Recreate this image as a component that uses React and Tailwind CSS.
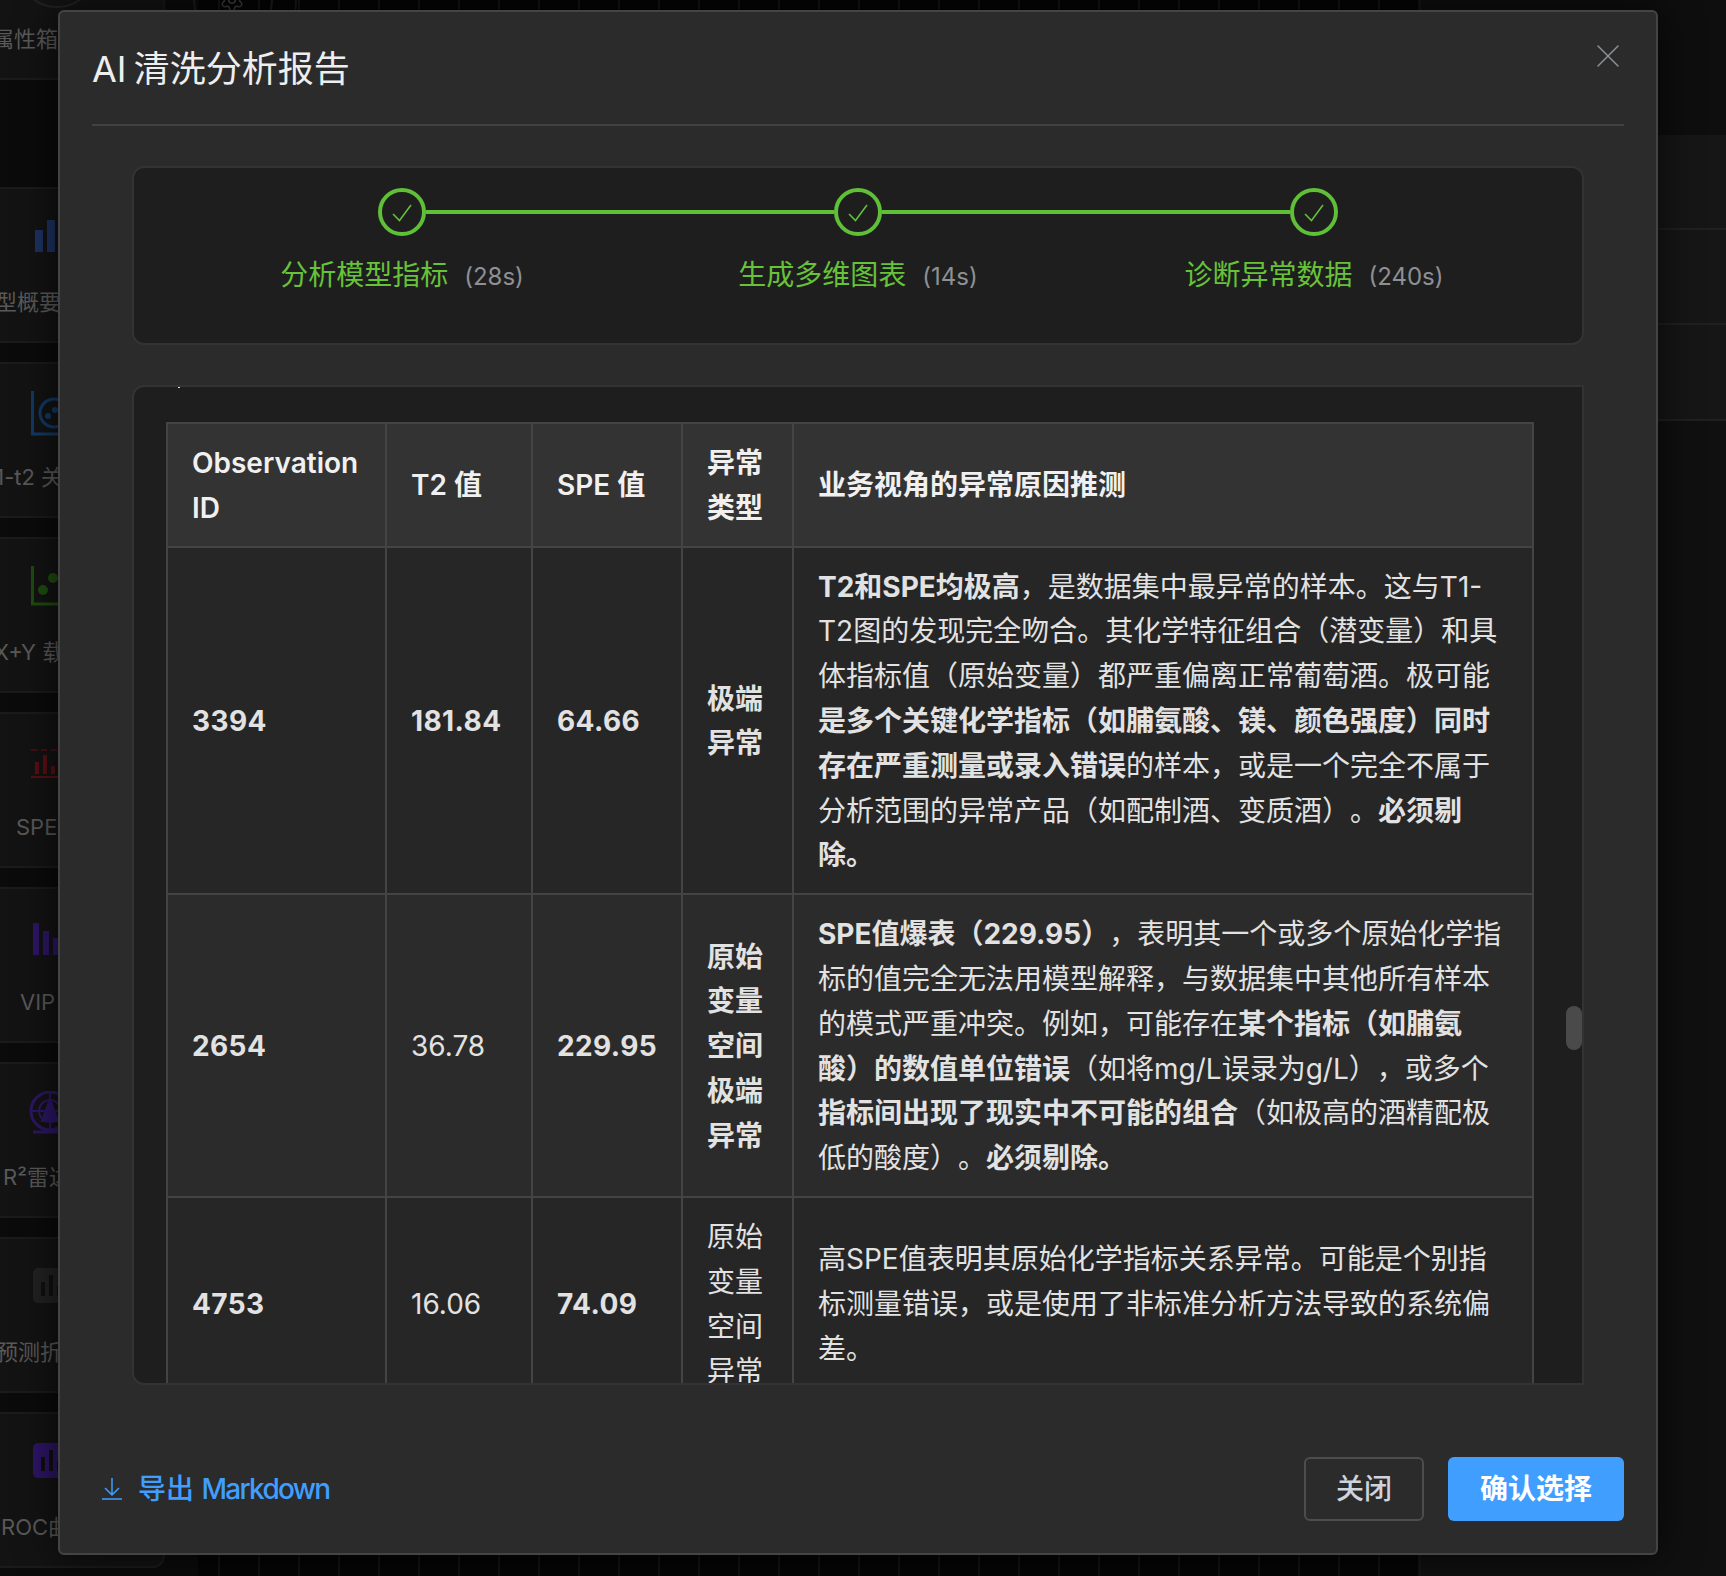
import { X, Settings } from "lucide-react";

const axis = "#123a66";

function BarsIcon() {
  return (
    <svg width="70" height="48" className="block" fill="#1e3261">
      <rect x="35" y="14" width="8" height="22" />
      <rect x="47" y="4" width="8" height="32" />
    </svg>
  );
}

function ScoreIcon() {
  return (
    <svg width="70" height="48" className="block" fill="none">
      <path d="M32.500 0V43H58" stroke={axis} strokeWidth="3" />
      <circle cx="54" cy="22" r="14" stroke={axis} strokeWidth="3" />
      <circle cx="48" cy="25" r="3" fill={axis} />
      <circle cx="55" cy="19" r="3" fill={axis} />
    </svg>
  );
}

function LoadingIcon() {
  return (
    <svg width="70" height="48" className="block" fill="none">
      <path d="M32.500 0V38H58" stroke="#1f4d0f" strokeWidth="3" />
      <circle cx="43" cy="24" r="5" fill="#1f4d0f" />
      <circle cx="53" cy="12" r="5" fill="#1f4d0f" />
    </svg>
  );
}

function SpeIcon() {
  return (
    <svg width="70" height="48" className="block" fill="#5a0f14">
      <path d="M31 9H58" stroke="#5a0f14" strokeWidth="1.500" strokeDasharray="6 4" />
      <rect x="35" y="21" width="4" height="12" />
      <rect x="43" y="14" width="4" height="19" />
      <rect x="51" y="25" width="4" height="8" />
      <rect x="31" y="35" width="27" height="2" />
    </svg>
  );
}

function VipIcon() {
  return (
    <svg width="70" height="48" className="block" fill="#2d1666">
      <rect x="33" y="7" width="6" height="32" />
      <rect x="43" y="15" width="6" height="24" />
      <rect x="53" y="22" width="6" height="17" />
    </svg>
  );
}

function RadarIcon() {
  return (
    <svg width="70" height="48" className="block" fill="none" stroke="#2d1666" strokeWidth="2">
      <circle cx="50" cy="20" r="19" strokeWidth="3" />
      <circle cx="50" cy="20" r="11" />
      <path d="M50 0V40M30 20H70" />
      <path d="M50 8L58 30H42Z" fill="#2d1666" />
      <path d="M33 41H66" strokeWidth="3" />
    </svg>
  );
}

function TileIcon({ bg }) {
  return (
    <svg width="70" height="48" className="block">
      <rect x="33" y="2" width="40" height="35" rx="5" fill={bg} />
      <rect x="41" y="16" width="4" height="14" fill="#101010" />
      <rect x="49" y="9" width="4" height="21" fill="#101010" />
      <rect x="57" y="20" width="4" height="10" fill="#101010" />
    </svg>
  );
}

// sidebar behind the dialog, only its left edge shows
const sideItems = [
  { icon: <BarsIcon />, label: "型概要", cls: "ml-[-5px]" },
  { icon: <ScoreIcon />, label: "t1-t2 关联", cls: "ml-[-12px]" },
  { icon: <LoadingIcon />, label: "X+Y 载荷图", cls: "ml-[-6px]" },
  { icon: <SpeIcon />, label: "SPE 贡献图", cls: "ml-[16px]" },
  { icon: <VipIcon />, label: "VIP 重要性", cls: "ml-[20px]" },
  { icon: <RadarIcon />, label: "R²雷达图表", cls: "ml-[3px]" },
  { icon: <TileIcon bg="#222222" />, label: "预测折线图", cls: "ml-[-4px]" },
  { icon: <TileIcon bg="#2c1566" />, label: "ROC曲线图", cls: "ml-[1px]" },
];

function Sidebar() {
  return (
    <div className="flex w-[198px] shrink-0 flex-col bg-[#0b0b0b] pr-[33px]">
      <div className="relative h-[80px] shrink-0 rounded-br-xl border-b-2 border-r-2 border-[#1b1b1b] bg-[#131313] pt-[24px]">
        <div className="absolute left-[17px] top-[-72px] h-[80px] w-[80px] rounded-full border-2 border-[#222222]" />
        <div className="ml-[-8px] whitespace-nowrap text-[22px] leading-[30px] text-[#595959]">属性箱管理</div>
      </div>
      <div className="mt-[107px] flex flex-col gap-[19px]">
        {sideItems.map((item) => (
          <div key={item.label} className="h-[156px] overflow-hidden rounded-r-xl border-y-2 border-r-2 border-[#1b1b1b] bg-[#131313] pt-[27px]">
            {item.icon}
            <div className={`mt-[23px] whitespace-nowrap text-[22px] leading-[30px] text-[#595959] ${item.cls}`}>{item.label}</div>
          </div>
        ))}
      </div>
    </div>
  );
}

function Backdrop() {
  return (
    <div className="flex h-[1576px] w-[1726px] overflow-hidden bg-[#050505]">
      <Sidebar />
      <div className="relative w-[1221px] shrink-0 bg-[linear-gradient(to_right,#131313_2px,transparent_2px)] bg-[size:40px_100%] bg-[position:20px_0]">
        <div className="absolute left-[-5px] top-[-40px] h-[80px] w-[80px] rounded-full border-2 border-[#1e1e1e]" />
        <div className="absolute left-[-35px] top-[-67px] h-[134px] w-[134px] rounded-full border-2 border-[#191919]" />
        <Settings size={26} strokeWidth={1.500} className="absolute left-[21px] top-[-13px] text-[#3a3a3a]" />
      </div>
      <div className="flex flex-1 flex-col border-l-2 border-[#151515] bg-[#101010]">
        <div className="h-[135px] bg-[#0e0e0e]" />
        <div className="h-[95px] border-b-2 border-[#202020] bg-[#161616]" />
        <div className="h-[95px] border-b-2 border-[#202020] bg-[#161616]" />
        <div className="h-[96px] border-b-2 border-[#202020] bg-[#161616]" />
      </div>
    </div>
  );
}

const steps = [
  { name: "分析模型指标", time: "(28s)" },
  { name: "生成多维图表", time: "(14s)" },
  { name: "诊断异常数据", time: "(240s)" },
];

function StepDot() {
  return (
    <div className="flex h-[48px] w-[48px] shrink-0 items-center justify-center rounded-full border-[4px] border-[#5fbf36]">
      <svg width="24" height="24" viewBox="0 0 24 24" fill="none" stroke="#67c23a" strokeWidth="1.500">
        <path d="M3 14l6.500 6.500L21 5" />
      </svg>
    </div>
  );
}

function Steps() {
  return (
    <div className="mx-[72px] mt-[40px] h-[179px] rounded-xl border-2 border-[#333333] bg-[#1e1e1e] px-[40px] pt-[20px]">
      <div className="flex items-center px-[204px]">
        <StepDot />
        <div className="h-[4px] flex-1 bg-[#5fbf36]" />
        <StepDot />
        <div className="h-[4px] flex-1 bg-[#5fbf36]" />
        <StepDot />
      </div>
      <div className="mt-[17px] grid grid-cols-3">
        {steps.map((s) => (
          <div key={s.name} className="flex items-baseline justify-center gap-[16px] leading-[44px]">
            <span className="text-[28px] text-[#67c23a]">{s.name}</span>
            <span className="text-[24px] text-[#8d9095]">{s.time}</span>
          </div>
        ))}
      </div>
    </div>
  );
}

const th = "border-2 border-[#444444] bg-[#333333] px-[24px] pb-[15px] pt-[17px] text-left font-semibold text-[#f0f0f0]";
const td = "border-2 border-[#444444] px-[24px] pb-[15px] pt-[17px] align-middle";
const num = "tracking-[0.4px]";

function ReportTable() {
  return (
    <table className="w-[1366px] table-fixed border-collapse text-[28px] leading-[44.800px] text-[#e2e2e2]">
      <colgroup>
        <col className="w-[219px]" />
        <col className="w-[146px]" />
        <col className="w-[150px]" />
        <col className="w-[111px]" />
        <col className="w-[740px]" />
      </colgroup>
      <thead>
        <tr>
          <th className={th}>Observation ID</th>
          <th className={th}>T2 值</th>
          <th className={th}>SPE 值</th>
          <th className={th}>异常类型</th>
          <th className={th}>业务视角的异常原因推测</th>
        </tr>
      </thead>
      <tbody>
        <tr className="bg-[#262626]">
          <td className={td}><strong className={num}>3394</strong></td>
          <td className={td}><strong className={num}>181.84</strong></td>
          <td className={td}><strong className={num}>64.66</strong></td>
          <td className={td}><strong>极端异常</strong></td>
          <td className={td}>
            <strong>T2和SPE均极高</strong>，是数据集中最异常的样本。这与T1-T2图的发现完全吻合。其化学特征组合（潜变量）和具体指标值（原始变量）都严重偏离正常葡萄酒。极可能<strong>是多个关键化学指标（如脯氨酸、镁、颜色强度）同时存在严重测量或录入错误</strong>的样本，或是一个完全不属于分析范围的异常产品（如配制酒、变质酒）。<strong>必须剔除。</strong>
          </td>
        </tr>
        <tr className="bg-[#2b2b2b]">
          <td className={td}><strong className={num}>2654</strong></td>
          <td className={td}>36.78</td>
          <td className={td}><strong className={num}>229.95</strong></td>
          <td className={td}><strong>原始变量空间极端异常</strong></td>
          <td className={td}>
            <strong>SPE值爆表（229.95）</strong>，表明其一个或多个原始化学指标的值完全无法用模型解释，与数据集中其他所有样本的模式严重冲突。例如，可能存在<strong>某个指标（如脯氨酸）的数值单位错误</strong>（如将mg/L误录为g/L），或多个<strong>指标间出现了现实中不可能的组合</strong>（如极高的酒精配极低的酸度）。<strong>必须剔除。</strong>
          </td>
        </tr>
        <tr className="bg-[#262626]">
          <td className={td}><strong className={num}>4753</strong></td>
          <td className={td}>16.06</td>
          <td className={td}><strong className={num}>74.09</strong></td>
          <td className={td}>原始变量空间异常</td>
          <td className={td}>高SPE值表明其原始化学指标关系异常。可能是个别指标测量错误，或是使用了非标准分析方法导致的系统偏差。</td>
        </tr>
      </tbody>
    </table>
  );
}

function ReportDialog() {
  return (
    <div className="absolute left-[58px] top-[10px] flex h-[1545px] w-[1600px] flex-col rounded-md border-2 border-[#444444] bg-[#2b2b2b] shadow-[0_0_40px_rgba(0,0,0,0.7)]">
      <div className="mx-[32px] flex h-[114px] shrink-0 items-start justify-between border-b-2 border-[#414141] pt-[33px]">
        <h1 className="text-[36px] leading-[48px] text-[#eeeeee] [word-spacing:-3px]">AI 清洗分析报告</h1>
        <button type="button" className="mr-[-4px] mt-[-9px] text-[#8d9095]">
          <X size={40} strokeWidth={0.900} />
        </button>
      </div>

      <Steps />

      <div className="relative mx-[72px] mt-[40px] h-[1000px] shrink-0 overflow-hidden rounded-l-xl border-2 border-[#333333] bg-[#1e1e1e] pl-[32px] pt-[35px]">
        <span className="absolute left-[44px] top-0 h-[1px] w-[2px] bg-[#e2e2e2]" />
        <ReportTable />
        <div className="absolute right-0 top-[619px] h-[44px] w-[16px] rounded-full bg-[#4a4a4a]" />
      </div>

      <div className="mx-[32px] mt-[72px] flex items-center justify-between">
        <button type="button" className="ml-[10px] flex items-center gap-[16px] text-[28px] font-medium text-[#409eff]">
          <svg width="20" height="22" viewBox="0 0 20 22" fill="none" stroke="currentColor" strokeWidth="1.500">
            <path d="M10 0V17M3 10l7 7 7-7M0 21h20" />
          </svg>
          <span>导出 <span className="tracking-[-1.700px]">Markdown</span></span>
        </button>
        <div className="flex gap-[24px]">
          <button type="button" className="h-[64px] w-[120px] rounded-md border-2 border-[#4c4d4f] text-[28px] font-medium text-[#cfd3dc]">关闭</button>
          <button type="button" className="h-[64px] w-[176px] rounded-md bg-[#409eff] text-[28px] font-semibold text-white">确认选择</button>
        </div>
      </div>
    </div>
  );
}

export default function App() {
  return (
    <div className="relative h-[1576px] w-[1726px] overflow-hidden font-['Inter','Noto_Sans_CJK_SC',sans-serif] [text-spacing-trim:space-all]">
      <Backdrop />
      <ReportDialog />
    </div>
  );
}
